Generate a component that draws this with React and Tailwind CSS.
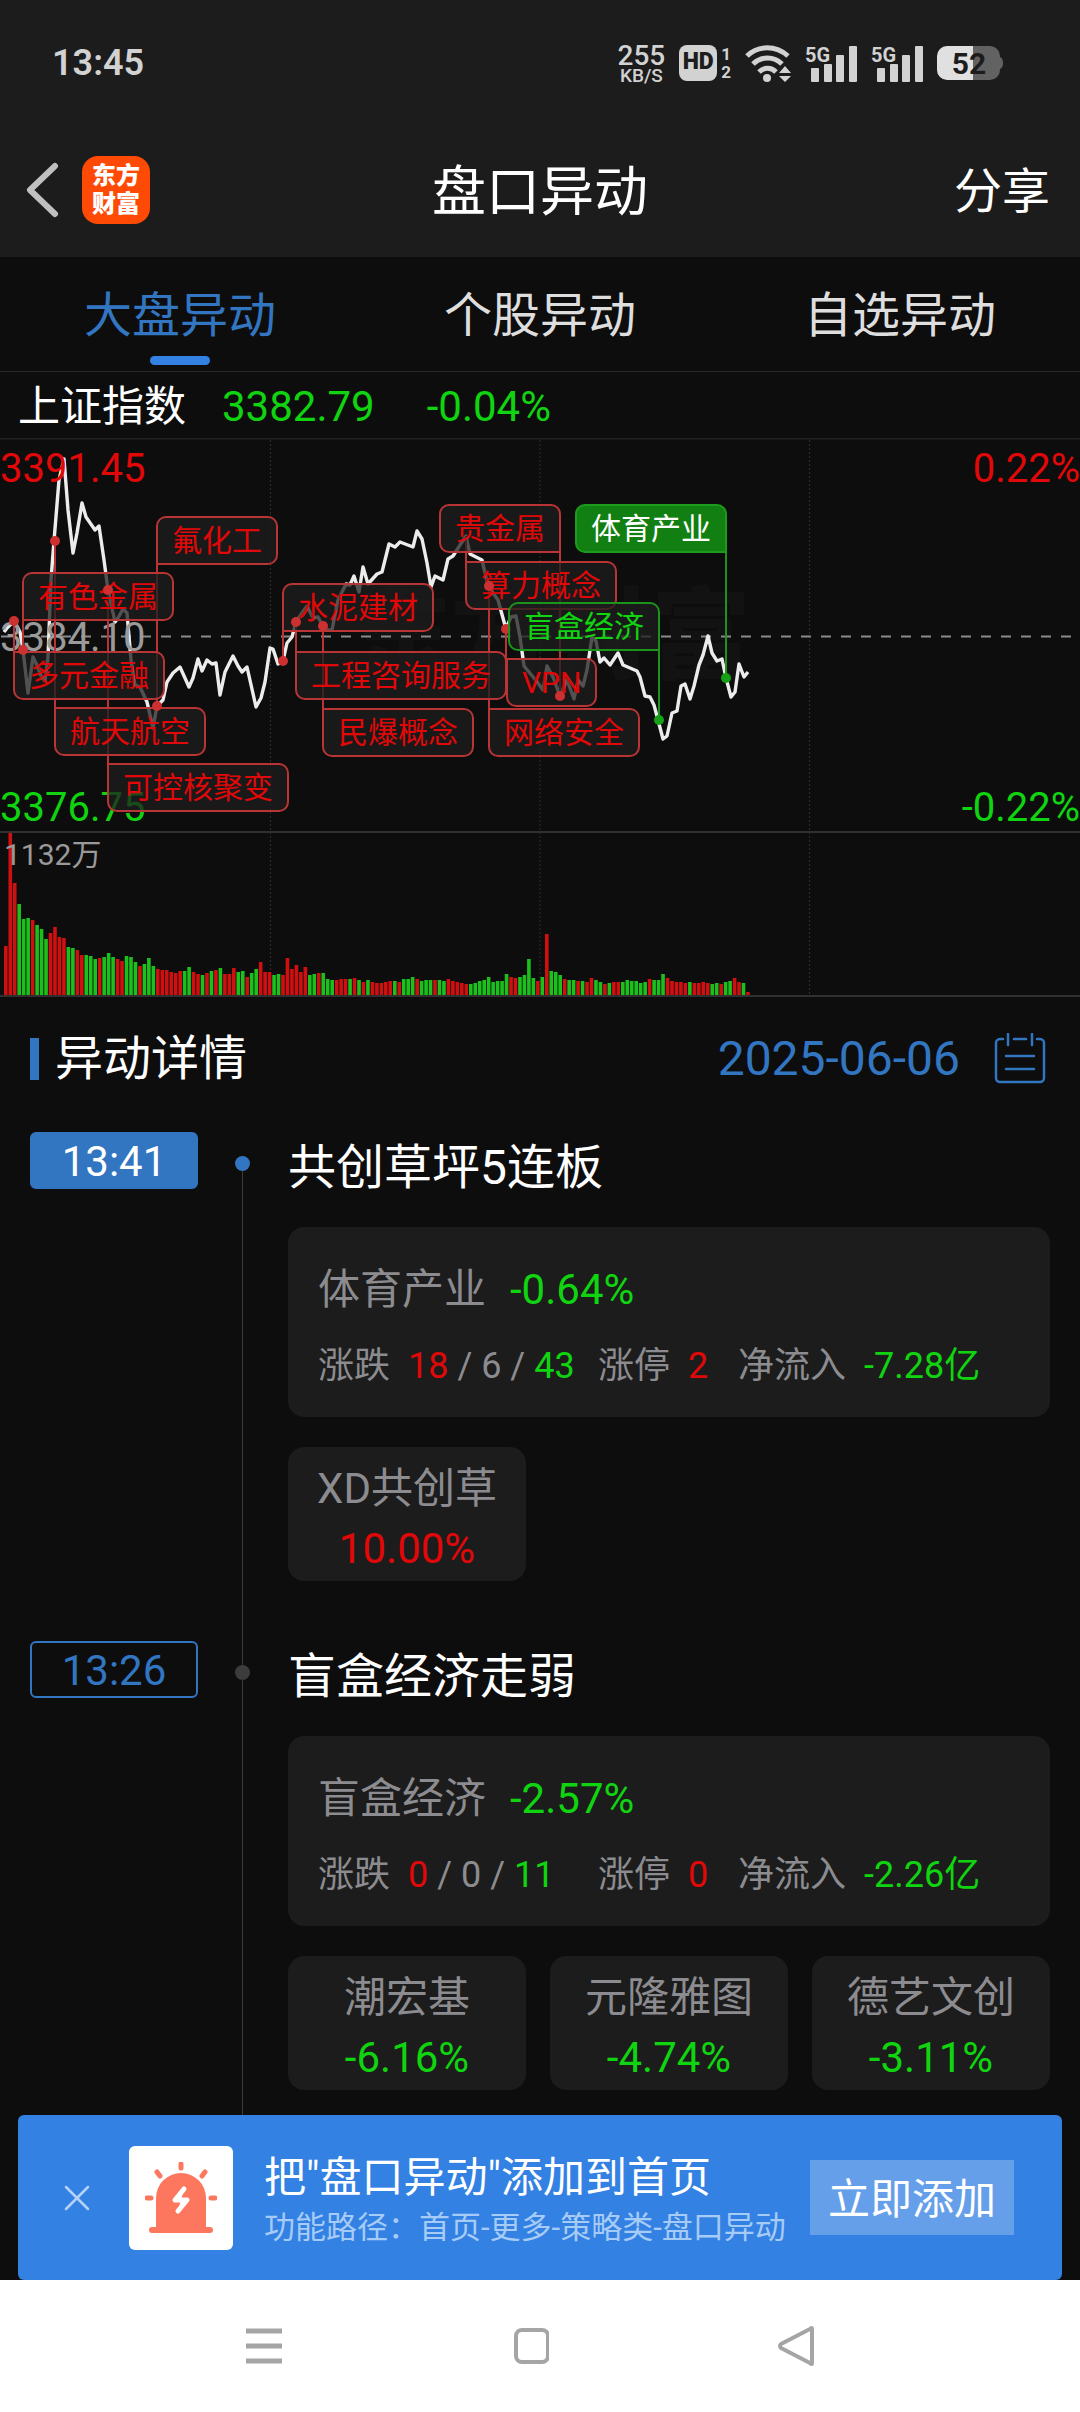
import React from 'react';
import clsx from 'clsx';

const TABS = ['大盘异动', '个股异动', '自选异动'];

// Plot area, in drawing units. Price pane sits above the volume pane.
const PLOT = { width: 1080, top: 438, split: 832, base: 995, height: 559 };

const PRICE_LINE =
  '4,632 7,628 14,621 20,632 23,650 28,693 33,657 36,663 42,678 45,681 48,657 51,580 54,541 59,480 64,459 68,510 73,553 77,533 82,503 86,517 95,530 99,526 104,560 108,590 115,622 118,618 123,609 127,613 131,660 135,685 140,687 147,702 153,728 157,706 163,700 167,682 173,673 180,667 189,687 193,678 198,659 202,671 207,660 212,664 216,663 220,695 225,672 233,656 238,666 242,672 247,667 256,707 261,698 265,682 270,648 273,649 278,664 283,661 287,643 292,637 296,622 302,613 307,606 313,618 318,617 323,626 327,630 332,630 338,600 346,584 350,585 354,576 359,592 363,567 368,584 377,574 382,572 389,544 395,547 400,542 413,547 417,531 422,539 427,563 431,587 435,576 443,580 448,559 453,556 460,545 466,536 470,554 482,560 488,586 498,600 506,629 511,617 516,616 520,637 524,666 529,672 538,683 543,690 547,666 553,677 560,696 567,680 574,699 578,680 583,686 587,670 592,637 596,641 600,662 604,658 610,665 618,653 623,665 637,671 640,677 645,696 650,697 654,705 658,720 663,739 667,736 672,713 677,711 681,686 685,684 690,699 694,686 699,665 703,655 708,636 712,653 717,661 722,659 726,678 731,697 735,692 739,664 744,677 748,672';

// One bar per minute: positive is a rise (red), negative a fall (green)
const VOLUMES = [
  49, 162, 112, -91, -76, -77, 75, -70, -66, -56, 62, 68, 58, 57, -48, -47, 45, 40, -40, -39,
  -36, 37, -38, -42, -38, 36, 34, -39, -38, -33, 29, -31, -37, -29, 26, 25, 25, 23, 22, 24,
  -24, -28, 23, 21, -20, 22, -24, 25, -27, 21, 21, 27, -23, -24, 18, -22, -26, 33, 23, 23,
  -20, -21, 20, 37, 26, 30, 23, 28, -20, -21, 22, -22, -16, -15, 15, 16, 16, -16, 17, -15,
  13, -15, 13, 12, 12, 13, 14, -14, 13, -16, -16, -18, 16, -14, -15, -15, 15, -15, -14, 16,
  14, 13, 12, 11, -11, -12, -14, -15, -18, -13, -14, -14, -21, 18, 17, -18, -20, -36, -17, 14,
  -18, 61, -24, -23, -20, 16, -15, -15, 14, -14, 13, 17, -15, -13, 11, -12, 13, 13, -13, -15,
  -14, -14, -12, -13, 16, -15, -15, -21, 17, 14, 13, 13, 12, -13, 12, 12, 13, 12, -11, -12,
  11, -13, -14, 17, 13, -12, 3,
];

// corner: the square corner, where the stem meets the tag
const UP_TAGS = [
  { name: '多元金融', x: 13, y: 651, corner: 'tl', pin: [14, 621] },
  { name: '有色金属', x: 22, y: 572, corner: 'bl', pin: [23, 650] },
  { name: '航天航空', x: 54, y: 707, corner: 'tl', pin: [55, 541] },
  { name: '可控核聚变', x: 107, y: 763, corner: 'tl', pin: [108, 590] },
  { name: '氟化工', x: 156, y: 516, corner: 'bl', pin: [157, 706] },
  { name: '水泥建材', x: 282, y: 583, corner: 'bl', pin: [283, 661] },
  { name: '工程咨询服务', x: 295, y: 651, corner: 'tl', pin: [296, 622] },
  { name: '民爆概念', x: 322, y: 708, corner: 'tl', pin: [323, 626] },
  { name: '算力概念', x: 465, y: 561, corner: 'tl', pin: [466, 536] },
  { name: '贵金属', x: 439, y: 504, corner: 'br', pin: [560, 696] },
  { name: '网络安全', x: 488, y: 708, corner: 'tl', pin: [489, 586] },
  { name: 'VPN', x: 506, y: 658, corner: 'tl', pin: [506, 629] },
];

const DOWN_TAGS = [
  { name: '盲盒经济', x: 508, y: 602, corner: 'br', pin: [659, 720] },
  { name: '体育产业', x: 575, y: 504, corner: 'br', pin: [726, 678], active: true },
];

const EVENTS = [
  {
    time: '13:41',
    title: '共创草坪5连板',
    latest: true,
    board: { name: '体育产业', change: '-0.64%', up: 18, flat: 6, down: 43, limit: 2, inflow: '-7.28亿' },
    stocks: [{ name: 'XD共创草', change: '10.00%' }],
  },
  {
    time: '13:26',
    title: '盲盒经济走弱',
    board: { name: '盲盒经济', change: '-2.57%', up: 0, flat: 0, down: 11, limit: 0, inflow: '-2.26亿' },
    stocks: [
      { name: '潮宏基', change: '-6.16%' },
      { name: '元隆雅图', change: '-4.74%' },
      { name: '德艺文创', change: '-3.11%' },
    ],
  },
];

const changeColor = (value) => (value.startsWith('-') ? 'text-[#10d410]' : 'text-[#e00808]');

const Signal = () => (
  <svg className="h-[38px] w-[52px]" viewBox="0 0 52 38" fill="#d2d2d2">
    <text x="0" y="18" fontSize="20" fontWeight="700" fontFamily="Roboto">5G</text>
    <rect x="6" y="24" width="8" height="14" rx="1" />
    <rect x="19" y="20" width="8" height="18" rx="1" />
    <rect x="31" y="11" width="8" height="27" rx="1" />
    <rect x="44" y="2" width="8" height="36" rx="1" />
  </svg>
);

const StatusBar = () => (
  <div className="flex h-[125px] items-center justify-between pl-[52px] pr-[76px] text-[#d2d2d2]">
    <span className="text-[36px] font-semibold">13:45</span>
    <div className="flex items-center gap-[14px]">
      <div className="flex flex-col items-center pt-1 font-medium">
        <span className="text-[28px] leading-[21px]">255</span>
        <span className="text-[19px] leading-[19px]">KB/S</span>
      </div>
      <div className="flex items-center gap-1">
        <span className="flex h-9 w-[38px] items-center justify-center rounded-lg bg-[#d2d2d2] text-[23px] font-black text-[#1c1c1c]">
          HD
        </span>
        <span className="flex flex-col text-[17px] font-bold leading-[18px]">
          <span>1</span>
          <span>2</span>
        </span>
      </div>
      <svg className="h-[38px] w-[46px]" viewBox="0 0 46 38" fill="none" stroke="#d2d2d2" strokeWidth="5">
        <path d="M2 12C13 1 31 1 43 12" />
        <path d="M8 20c8-8 21-8 29 0" />
        <path d="M14 28c5-5 12-5 17 0" />
        <circle cx="22" cy="34" r="4" fill="#d2d2d2" stroke="none" />
        <path d="M40 22l6 7H34zM40 38l6-6H34z" fill="#d2d2d2" stroke="none" />
      </svg>
      <Signal />
      <Signal />
      <svg className="h-[34px] w-[67px]" viewBox="0 0 67 34">
        <path d="M36 0h17a10 10 0 0 1 10 10v1q3 1 3 6t-3 6v1a10 10 0 0 1-10 10H36z" fill="#626262" />
        <path d="M36 0H10A10 10 0 0 0 0 10v14a10 10 0 0 0 10 10h26z" fill="#e0e0e0" />
        <text x="32" y="28" fontSize="30" fontWeight="700" fontFamily="Roboto" textAnchor="middle" fill="#1c1c1c">52</text>
      </svg>
    </div>
  </div>
);

const Header = () => (
  <header className="bg-[#1c1c1c]">
    <StatusBar />
    <div className="grid h-[132px] grid-cols-3 items-center">
      <div className="flex items-center gap-[22px] pb-[2px] pl-[26px]">
        <button aria-label="返回">
          <svg className="h-[58px] w-[34px]" viewBox="0 0 34 58" fill="none" stroke="#c0c0c0" strokeWidth="6" strokeLinecap="round" strokeLinejoin="round">
            <path d="M29 5L4 29l25 24" />
          </svg>
        </button>
        <span className="flex h-[68px] w-[68px] flex-col items-center justify-center rounded-2xl bg-[#ff4a05] text-[24px] font-black leading-[28px] text-white">
          <span>东方</span>
          <span>财富</span>
        </span>
      </div>
      <h1 className="pt-[2px] text-center text-[54px] text-white">盘口异动</h1>
      <button className="justify-self-end pr-[30px] pt-[2px] text-[48px] text-white">分享</button>
    </div>
  </header>
);

const Tabs = () => (
  <nav className="grid h-[115px] grid-cols-3 border-b border-[#2a2a2a]">
    {TABS.map((tab, i) => (
      <button key={tab} className="flex flex-col items-center justify-between pb-[6px] text-[48px]">
        <span className={clsx('h-[99px] leading-[118px]', i === 0 ? 'text-[#3275c0]' : 'text-[#dedede]')}>{tab}</span>
        {i === 0 && <span className="h-[9px] w-[60px] rounded-full bg-[#3381e3]" />}
      </button>
    ))}
  </nav>
);

const Stem = ({ tag, color }) => {
  const [x, y] = tag.pin;
  const from = y < tag.y ? tag.y : tag.y + 49;
  return <path d={`M${x} ${from}V${y}`} stroke={color} strokeWidth="2" />;
};

const CORNERS = {
  tl: 'rounded-[10px] rounded-tl-none',
  bl: 'rounded-[10px] rounded-bl-none',
  br: 'rounded-[10px] rounded-br-none',
};

const Tag = ({ tag, down }) => (
  <button
    className={clsx(
      'absolute flex h-[49px] items-center whitespace-nowrap border-2 px-[14px] text-[30px]',
      CORNERS[tag.corner],
      !down && 'border-[#b93434] bg-[#1d1d1d]/75 text-[#e00808]',
      down && !tag.active && 'border-[#1c931c] bg-[#1d1d1d]/75 text-[#10d410]',
      down && tag.active && 'border-[#1c9c1c] bg-[#117f11] text-white'
    )}
    style={{ left: `${(tag.x / PLOT.width) * 100}%`, top: tag.y - PLOT.top }}
  >
    {tag.name}
  </button>
);

const Layer = ({ children }) => (
  <svg
    className="pointer-events-none absolute inset-0 h-full w-full"
    viewBox={`0 ${PLOT.top} ${PLOT.width} ${PLOT.height}`}
    preserveAspectRatio="none"
    fill="none"
  >
    {children}
  </svg>
);

const Chart = () => (
  <section className="relative h-[559px] text-[40px] leading-[46px]">
    <span className="absolute left-[32.5%] top-[124px] text-[100px] font-black leading-[150px] text-[#121212]">东方财富</span>

    <Layer>
      <path d="M270.5 440V995M540 440V995M809.5 440V995" stroke="#2e2e2e" strokeDasharray="2 2" />
      <path d="M0 438H1080" stroke="#222" strokeWidth="3" />
      <path d={`M0 ${PLOT.split}H1080M0 996H1080`} stroke="#303030" strokeWidth="2" />
      <path d="M1 636.5H1080" stroke="#8a8a8a" strokeWidth="2" strokeDasharray="10 10" />
      {VOLUMES.map((v, i) => (
        <rect
          key={i}
          x={4 + i * 4.471}
          y={PLOT.base - Math.abs(v)}
          width="3.6"
          height={Math.abs(v)}
          fill={v > 0 ? '#d01010' : '#1cc01c'}
        />
      ))}
      <polyline points={PRICE_LINE} stroke="#ececec" strokeWidth="3.4" strokeLinejoin="round" />
    </Layer>

    <span className="absolute left-0 top-2 text-[#e00808]">3391.45</span>
    <span className="absolute left-0 top-[177px] text-[#9a9a9a]">3384.10</span>
    <span className="absolute left-0 top-[347px] text-[#10d410]">3376.75</span>
    <span className="absolute right-0 top-2 text-[#e00808]">0.22%</span>
    <span className="absolute right-0 top-[347px] text-[#10d410]">-0.22%</span>
    <span className="absolute left-1 top-[394px] text-[30px] text-[#9a9a9a]">1132万</span>

    <Layer>
      {UP_TAGS.map((tag) => <Stem key={tag.name} tag={tag} color="#b93434" />)}
    </Layer>
    {UP_TAGS.map((tag) => <Tag key={tag.name} tag={tag} />)}
    <Layer>
      {UP_TAGS.filter((tag) => tag.name !== '算力概念').map((tag) => (
        <circle key={tag.name} cx={tag.pin[0]} cy={tag.pin[1]} r="5" fill="#cc3030" />
      ))}
      {DOWN_TAGS.map((tag) => <Stem key={tag.name} tag={tag} color="#1c931c" />)}
    </Layer>
    {DOWN_TAGS.map((tag) => <Tag key={tag.name} tag={tag} down />)}
    <Layer>
      {DOWN_TAGS.map((tag) => (
        <circle key={tag.name} cx={tag.pin[0]} cy={tag.pin[1]} r="5" fill="#16a016" />
      ))}
    </Layer>
  </section>
);

const BoardCard = ({ board }) => (
  <div className="rounded-2xl bg-[#1c1c1c] px-[30px] pb-6 pt-8 text-[#8c8c90]">
    <div className="flex h-[60px] items-center gap-6 text-[42px]">
      <span>{board.name}</span>
      <span className={changeColor(board.change)}>{board.change}</span>
    </div>
    <div className="mt-5 flex h-[54px] items-center whitespace-nowrap text-[36px]">
      <div className="flex w-[280px] gap-[18px]">
        <span>涨跌</span>
        <span>
          <span className="text-[#e00808]">{board.up}</span> / {board.flat} /{' '}
          <span className="text-[#10d410]">{board.down}</span>
        </span>
      </div>
      <div className="flex w-[140px] gap-[18px]">
        <span>涨停</span>
        <span className="text-[#e00808]">{board.limit}</span>
      </div>
      <div className="flex gap-[18px]">
        <span>净流入</span>
        <span className={changeColor(board.inflow)}>{board.inflow}</span>
      </div>
    </div>
  </div>
);

const StockCard = ({ stock }) => (
  <div className="flex h-[134px] flex-col rounded-2xl bg-[#1c1c1c] pt-3 text-center text-[42px] leading-[60px]">
    <span className="text-[#8c8c90]">{stock.name}</span>
    <span className={changeColor(stock.change)}>{stock.change}</span>
  </div>
);

const EventItem = ({ event, last }) => (
  <li className="flex px-[30px]">
    <time
      className={clsx(
        'flex h-[57px] w-[168px] shrink-0 items-center justify-center rounded-md border-2 border-[#3275c0] pt-[2px] text-[42px]',
        event.latest ? 'bg-[#3275c0] text-white' : 'text-[#3275c0]'
      )}
    >
      {event.time}
    </time>
    <div className="flex w-[90px] shrink-0 flex-col items-center pr-[2px]">
      <span className={clsx('h-6 w-px', !event.latest && 'bg-[#3a3a3a]')} />
      <span className={clsx('h-[15px] w-[15px] rounded-full', event.latest ? 'bg-[#3275c0]' : 'bg-[#3c3c3c]')} />
      <span className="w-px flex-1 bg-[#3a3a3a]" />
    </div>
    <div className={clsx('min-w-0 flex-1', last ? 'pb-[25px]' : 'pb-[60px]')}>
      <h3 className="mb-[23px] text-[48px] leading-[72px] text-white">{event.title}</h3>
      <BoardCard board={event.board} />
      <div className="mt-[30px] grid grid-cols-3 gap-6">
        {event.stocks.map((stock) => <StockCard key={stock.name} stock={stock} />)}
      </div>
    </div>
  </li>
);

const Details = () => (
  <section>
    <div className="flex h-[124px] items-center justify-between pl-[30px] pr-[34px] text-[48px]">
      <h2 className="flex items-center gap-4 text-white">
        <span className="h-[42px] w-[9px] bg-[#3275c0]" />
        异动详情
      </h2>
      <button className="flex items-center gap-[34px] text-[#3275c0]">
        2025-06-06
        <svg className="h-[52px] w-[52px]" viewBox="0 0 52 52" fill="none" stroke="currentColor" strokeWidth="2.5" strokeLinecap="round">
          <path d="M9 6H6a4 4 0 0 0-4 4v35a4 4 0 0 0 4 4h40a4 4 0 0 0 4-4V10a4 4 0 0 0-4-4h-3M20 6h12M14 1v11M38 1v11M12 23h28M12 36h28" />
        </svg>
      </button>
    </div>
    <ul className="pt-[11px]">
      {EVENTS.map((event, i) => <EventItem key={event.time} event={event} last={i === EVENTS.length - 1} />)}
    </ul>
  </section>
);

const Banner = () => (
  <aside className="mx-[18px] flex h-[165px] items-center rounded-md bg-[#3381e3] pl-[46px] pr-[48px]">
    <button aria-label="关闭">
      <svg className="h-[26px] w-[26px]" viewBox="0 0 26 26" stroke="#b4d2f6" strokeWidth="2.5" strokeLinecap="round">
        <path d="M2 2l22 22M24 2L2 24" />
      </svg>
    </button>
    <span className="ml-[39px] flex h-[104px] w-[104px] items-center justify-center rounded-md bg-white">
      <svg className="h-[72px] w-[72px]" viewBox="0 0 72 72" fill="#fd775e">
        <path d="M11 65V36a25 25 0 0 1 50 0v29h4a3 3 0 0 1 0 6H7a3 3 0 0 1 0-6z" />
        <path d="M36 2v4M12 10l3 4M60 10l-3 4M2 36h4M66 36h4" stroke="#fd775e" strokeWidth="5" strokeLinecap="round" />
        <path d="M39 27l-9 11h12l-9 11" fill="#fff" stroke="#fff" strokeWidth="5" strokeLinejoin="round" strokeLinecap="round" />
      </svg>
    </span>
    <div className="ml-[31px] min-w-0 flex-1 whitespace-nowrap pt-[6px]">
      <p className="text-[42px] leading-[54px] text-white">把"盘口异动"添加到首页</p>
      <p className="text-[31px] leading-[46px] text-[#a6cbf6]">功能路径：首页-更多-策略类-盘口异动</p>
    </div>
    <button className="h-[75px] w-[204px] bg-[#669fe9] pt-1 text-[42px] text-white">立即添加</button>
  </aside>
);

const SystemNav = () => (
  <nav className="flex h-[132px] items-center justify-center gap-[228px] bg-white pr-5">
    <button aria-label="最近任务">
      <svg className="h-10 w-[38px]" viewBox="0 0 38 40" stroke="#a5a5a5" strokeWidth="5">
        <path d="M1 5h36M1 20h36M1 35h36" />
      </svg>
    </button>
    <button aria-label="主屏幕">
      <svg className="h-10 w-[38px]" viewBox="0 0 38 40" fill="none" stroke="#a5a5a5" strokeWidth="4">
        <rect x="5" y="4" width="32" height="32" rx="6" />
      </svg>
    </button>
    <button aria-label="返回上一页">
      <svg className="h-10 w-[38px]" viewBox="0 0 38 40" fill="none" stroke="#a5a5a5" strokeWidth="4" strokeLinejoin="round">
        <path d="M35 3v34q0 2-2 0L4 22q-2-2 0-4L33 3q2-2 2 0z" />
      </svg>
    </button>
  </nav>
);

const App = () => (
  <div lang="zh-CN" className="bg-[#0d0d0d] font-['Roboto','Noto_Sans_CJK_SC',sans-serif]">
    <Header />
    <Tabs />
    <div className="flex h-[66px] items-center pl-[18px] pt-[2px] text-[42px] text-[#10d410]">
      <span className="text-white">上证指数</span>
      <span className="ml-9">3382.79</span>
      <span className="ml-[52px]">-0.04%</span>
    </div>
    <Chart />
    <Details />
    <Banner />
    <SystemNav />
  </div>
);

export default App;
